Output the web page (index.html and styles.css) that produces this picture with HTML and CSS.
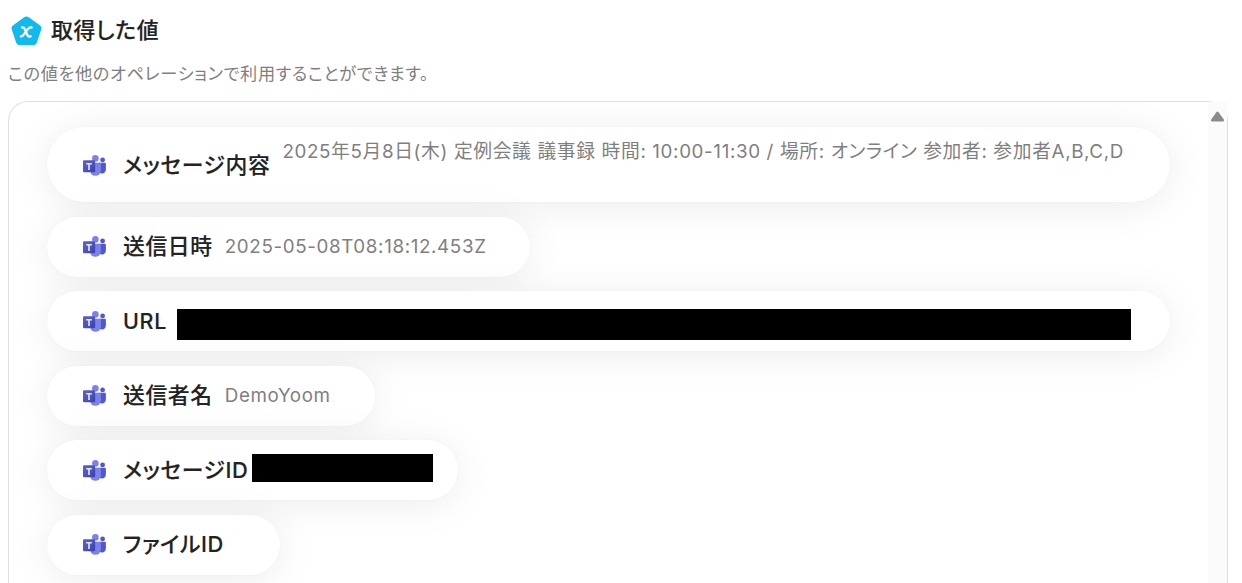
FILE: index.html
```html
<!DOCTYPE html>
<html lang="ja">
<head>
<meta charset="utf-8">
<title>取得した値</title>
<link rel="stylesheet" href="styles.css">
</head>
<body>
<svg class="defs" aria-hidden="true">
  <defs>
    <linearGradient id="tile" x1="0" y1="0" x2="1" y2="1">
      <stop offset="0" stop-color="#5a62c3"/><stop offset=".5" stop-color="#4d55bd"/><stop offset="1" stop-color="#3940ab"/>
    </linearGradient>
    <symbol id="teams" viewBox="0 0 23 21">
      <circle cx="19.6" cy="4.9" r="2.4" fill="#5059c9"/>
      <path d="M15.5 7.7h6.2c.7 0 1.2.5 1.2 1.2v5.7a4 4 0 0 1-6.6 3z" fill="#5059c9"/>
      <circle cx="12.4" cy="3.4" r="3.3" fill="#7b83eb"/>
      <path d="M7 7.7h9.9c.6 0 1 .5 1 1.1v6.5a5.5 5.5 0 0 1-11 0z" fill="#7b83eb"/>
      <path d="M7 7.7h5.3v8.1c0 .7-.5 1.2-1.2 1.2H7.2z" fill="#5c64c9"/>
      <rect x="0" y="5.2" width="12" height="12" rx="1" fill="url(#tile)"/>
      <path d="M3.2 8h5.6v1.5H6.8v5.4H5.2V9.5h-2z" fill="#e8e9fa"/>
    </symbol>
  </defs>
</svg>
<header class="header">
  <svg class="logo" viewBox="0 0 31 30">
    <path d="M13.2 1.2Q15.5-.4 17.8 1.2L28.8 9.2Q31.1 10.8 30.2 13.5L26 26.2Q25.1 29 22.2 29H8.8Q5.9 29 5 26.2L.8 13.5Q-.1 10.8 2.2 9.2z" fill="#12b9ec"/>
    <path d="M11 11.5Q12.9 11.1 13.7 13L16.3 19Q17.2 21 19.6 20.3M20.6 11.5Q18.4 11.1 16.9 13L12.5 18.9Q11.3 20.7 9.8 20.3" fill="none" stroke="#fff" stroke-width="2.3" stroke-linecap="round"/>
  </svg>
  <h1 class="title">取得した値</h1>
</header>
<p class="description">この値を他のオペレーションで利用することができます。</p>
<main class="panel">
  <div class="list">
    <div class="item item-tall"><svg class="icon"><use href="#teams"/></svg><span class="label">メッセージ内容</span><span class="value">2025年5月8日(木) 定例会議 議事録 時間: 10:00-11:30 / 場所: オンライン 参加者: 参加者A,B,C,D</span></div>
    <div class="item item-date"><svg class="icon"><use href="#teams"/></svg><span class="label">送信日時</span><span class="value">2025-05-08T08:18:12.453Z</span></div>
    <div class="item item-url"><svg class="icon"><use href="#teams"/></svg><span class="label label-latin">URL</span><span class="mask mask-url"></span></div>
    <div class="item item-sender"><svg class="icon"><use href="#teams"/></svg><span class="label">送信者名</span><span class="value">DemoYoom</span></div>
    <div class="item item-message"><svg class="icon"><use href="#teams"/></svg><span class="label">メッセージID</span><span class="mask mask-message"></span></div>
    <div class="item item-file"><svg class="icon"><use href="#teams"/></svg><span class="label">ファイルID</span></div>
  </div>
  <div class="scrollbar"><svg class="arrow" viewBox="0 0 12 10"><path d="M5 1Q6-.3 7 1L11.7 7.5Q12.6 9.5 11 9.5H1Q-.6 9.5.3 7.5z" fill="#8b8b8b"/></svg></div>
</main>
</body>
</html>
```
FILE: styles.css
```css
* { box-sizing: border-box; }
html, body { height: 100%; }
body {
  margin: 0;
  overflow: hidden;
  display: flex;
  flex-direction: column;
  background: #fff;
  color: #222;
  font-family: Inter, "Noto Sans CJK JP", sans-serif;
  font-feature-settings: "palt";
  letter-spacing: .04em;
}
.defs { position: absolute; width: 0; height: 0; }
.header { display: flex; align-items: flex-start; gap: 9px; height: 45px; padding: 15px 0 0 11px; flex: none; }
.logo { width: 31px; height: 30px; margin-top: 1px; }
.title { margin: 0; font-size: 21.9px; line-height: 30px; font-weight: 500; -webkit-text-stroke: .15px #222; }
.description { flex: none; margin: 15px 0 0 8px; height: 41px; font-size: 17.2px; line-height: 28px; color: #7f7f7f; white-space: nowrap; }
.panel { display: flex; flex: 1; min-height: 0; width: 1220px; margin-left: 8px; border: 1px solid #e0e0e0; border-bottom: 0; border-radius: 20px 20px 0 0; }
.list { flex: 1; display: flex; flex-direction: column; align-items: flex-start; gap: 14.5px; padding: 25px 0 0 38px; border-top-left-radius: 19px; overflow: hidden; }
.item { display: flex; align-items: center; flex: none; height: 60px; padding-left: 36px; border-radius: 38px; background: #fff; box-shadow: 0 4px 38px rgba(0, 0, 0, .08), 0 0 2px rgba(0, 0, 0, .04); white-space: nowrap; }
.item-tall { width: 1123px; height: 75px; }
.item-date { width: 483px; }
.item-url { width: 1123px; }
.item-sender { width: 328px; }
.item-message { width: 411px; }
.item-file { width: 233px; }
.icon { width: 23px; height: 21px; margin-right: 17px; flex: none; }
.item-tall .icon { margin-top: 1px; }
.label { font-size: 21.8px; line-height: 32px; font-weight: 500; padding-bottom: 1px; -webkit-text-stroke: .15px #222; }
.item-tall .label { padding: 1px 0 0; }
.label-latin { width: 43.5px; font-size: 21.5px; padding-bottom: 0; }
.value { margin-left: 12px; font-size: 18.78px; line-height: 28px; color: #7f7f7f; }
.item-tall .value { align-self: flex-start; margin-top: 11px; }
.mask { background: #000; }
.mask-url { width: 954px; height: 31px; margin: 7px 0 0 10px; }
.mask-message { width: 181px; height: 28px; margin: -4px 0 0 4px; }
.scrollbar { width: 19px; flex: none; background: #fbfbfb; padding: 9px 0 0 3px; }
.arrow { display: block; width: 13px; height: 11px; }
```
